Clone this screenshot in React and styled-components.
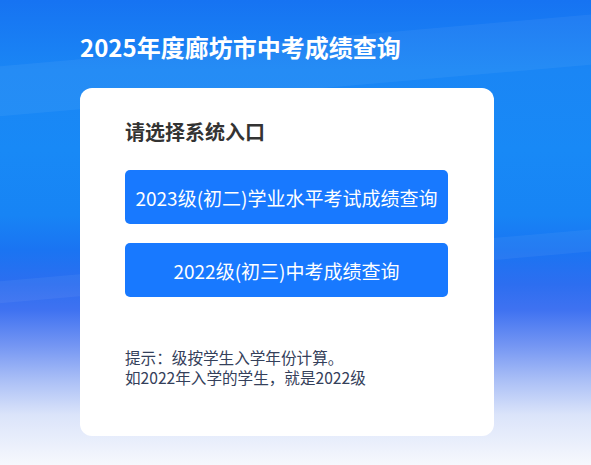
import React from "react";
import styled, { createGlobalStyle } from "styled-components";

const Global = createGlobalStyle`
  html, body { margin: 0; padding: 0; }
  body { font-family: "Noto Sans CJK SC", "Noto Sans", sans-serif; }
`;

const Page = styled.div`
  position: relative;
  overflow: hidden;
  width: 591px;
  height: 465px;
  box-sizing: border-box;
  padding: 30px 0 0 80px;
  background: linear-gradient(
    180deg,
    #1673f2 0px,
    #1a86f5 70px,
    #1889f6 150px,
    #1784f5 215px,
    #1a74f2 250px,
    #2d6ef0 285px,
    #3f72f1 310px,
    #7395f3 345px,
    #aabff6 380px,
    #dbe4fa 415px,
    #f6f8fd 465px
  );
  &::before {
    content: "";
    position: absolute;
    left: -50px;
    top: 40px;
    width: 700px;
    height: 50px;
    background: rgba(255, 255, 255, 0.05);
    transform: rotate(-5deg);
  }
  &::after {
    content: "";
    position: absolute;
    left: -50px;
    top: 255px;
    width: 700px;
    height: 22px;
    background: rgba(255, 255, 255, 0.05);
    transform: rotate(-5deg);
  }
`;

const Content = styled.div`
  position: relative;
  z-index: 1;
  display: flex;
  flex-direction: column;
  gap: 24px;
`;

const Title = styled.h1`
  margin: 0;
  color: #fff;
  font-size: 24px;
  line-height: 34px;
  font-weight: 700;
`;

const Card = styled.div`
  width: 414px;
  height: 348px;
  box-sizing: border-box;
  background: #fff;
  border-radius: 12px;
  padding: 30px 46px 0 45px;
  display: flex;
  flex-direction: column;
`;

const Heading = styled.h2`
  margin: 0 0 24px;
  font-size: 20px;
  line-height: 28px;
  font-weight: 700;
  color: #333;
`;

const Buttons = styled.div`
  display: flex;
  flex-direction: column;
  gap: 19px;
`;

const EntryButton = styled.button`
  height: 54px;
  width: 100%;
  border: none;
  border-radius: 5px;
  background: #1879ff;
  color: #fff;
  font-family: inherit;
  font-size: 19px;
  padding: 0;
  cursor: pointer;
`;

const Hint = styled.p`
  margin: 50px 0 0;
  font-size: 15.6px;
  line-height: 20px;
  color: #34405a;
`;

export default function App() {
  return (
    <>
      <Global />
      <Page>
        <Content>
          <Title>2025年度廊坊市中考成绩查询</Title>
          <Card>
            <Heading>请选择系统入口</Heading>
            <Buttons>
              <EntryButton>2023级(初二)学业水平考试成绩查询</EntryButton>
              <EntryButton>2022级(初三)中考成绩查询</EntryButton>
            </Buttons>
            <Hint>
              提示：级按学生入学年份计算。
              <br />
              如2022年入学的学生，就是2022级
            </Hint>
          </Card>
        </Content>
      </Page>
    </>
  );
}
